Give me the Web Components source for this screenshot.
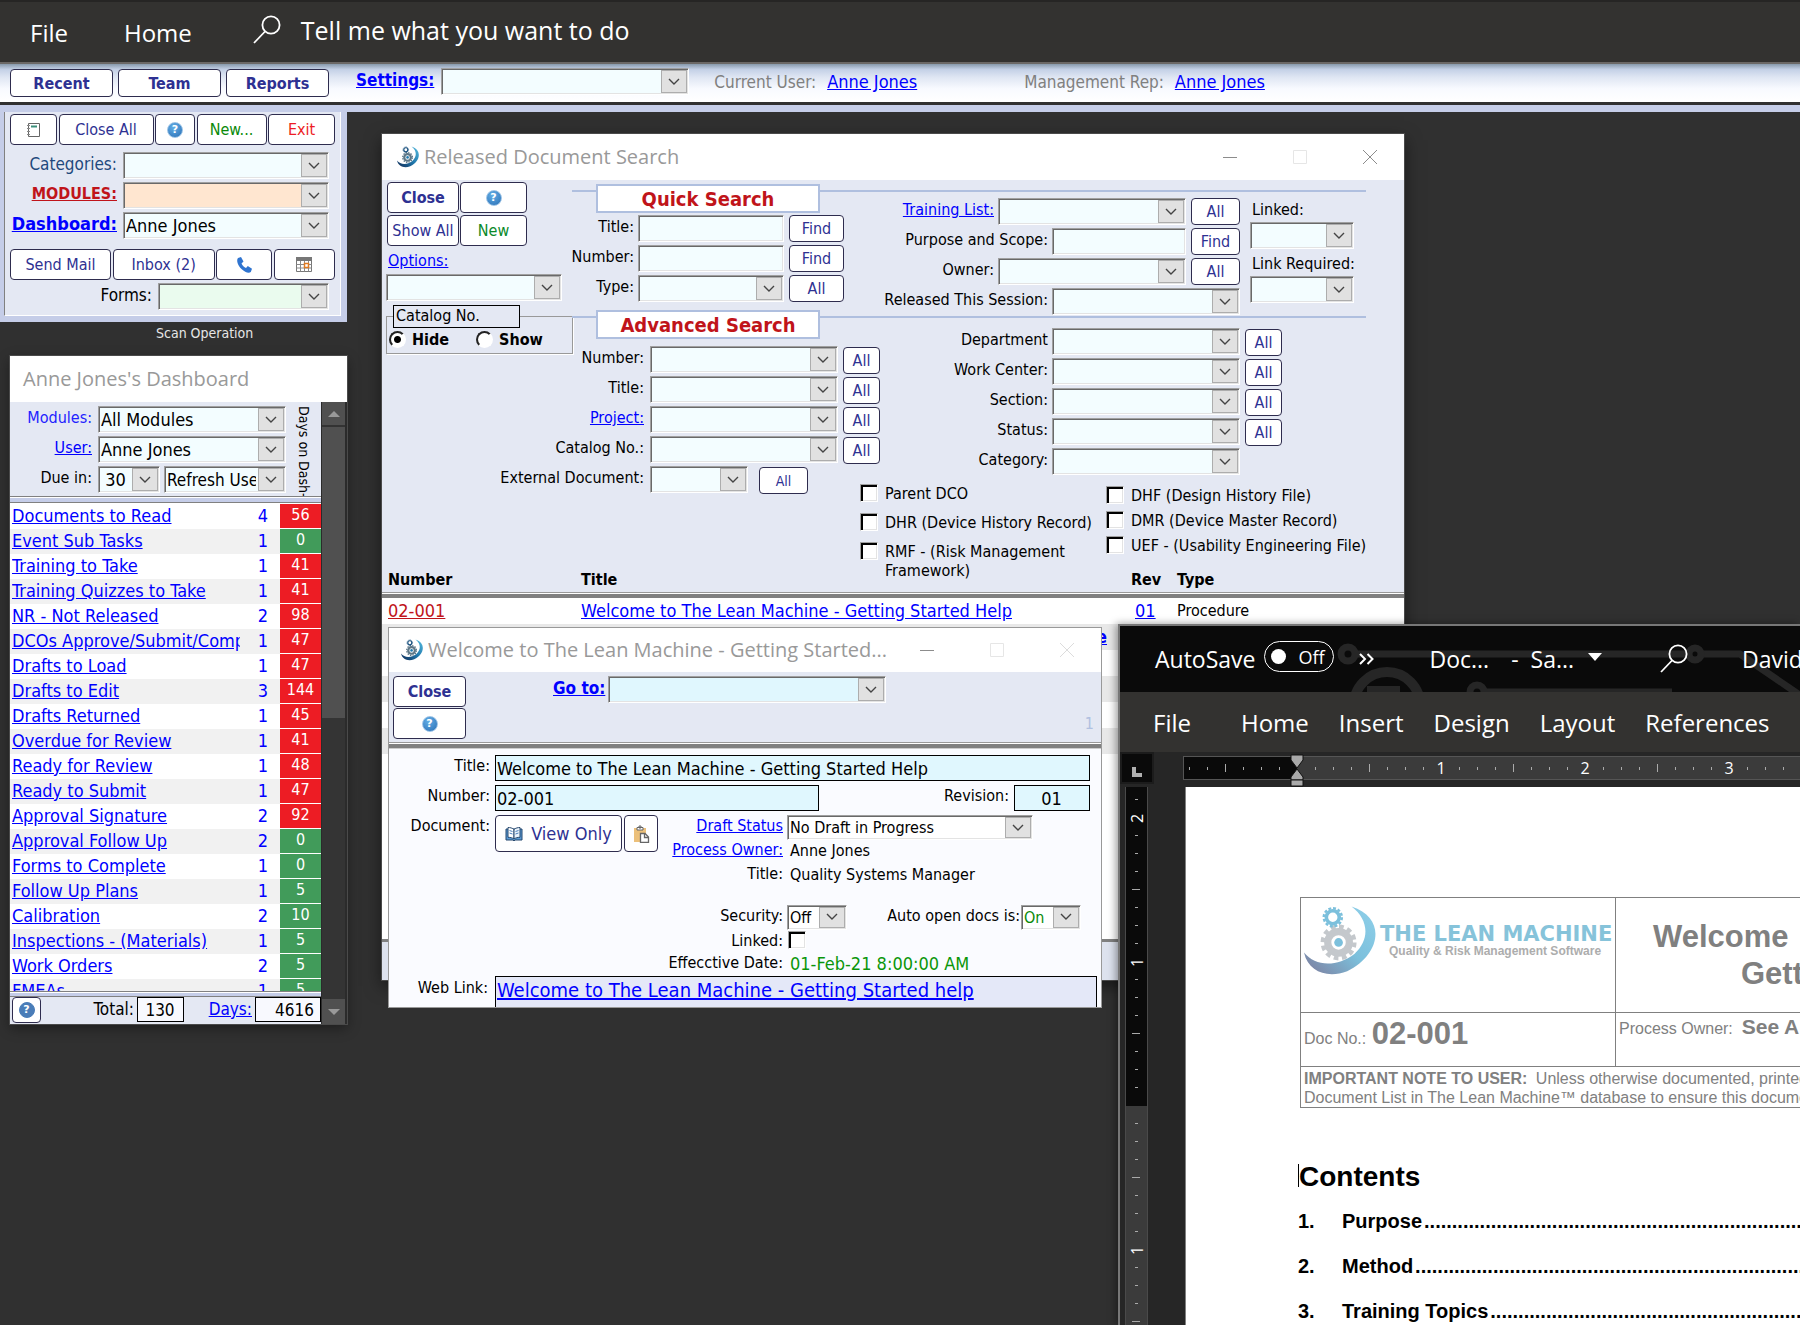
<!DOCTYPE html>
<html lang="en">
<head>
<meta charset="utf-8">
<title>The Lean Machine</title>
<style>
html, body { height: 100%; margin: 0; }
body { overflow: hidden; background: #303030; font-family: "DejaVu Sans Condensed", "DejaVu Sans", sans-serif; font-size: 16px; color: #000; }
</style>
</head>
<body>
<lean-desktop></lean-desktop>
<script>
const define = (name, css, html, setup) => {
  const tpl = document.createElement('template');
  tpl.innerHTML = `<style>*{box-sizing:border-box}:host{box-sizing:border-box}${css}</style>${typeof html === 'string' ? html : ''}`;
  customElements.define(name, class extends HTMLElement {
    constructor() {
      super();
      this.attachShadow({ mode: 'open' });
    }
    connectedCallback() {
      if (this.shadowRoot.childNodes.length) return;
      this.shadowRoot.append(tpl.content.cloneNode(true));
      if (typeof html === 'function') {
        const t = document.createElement('template');
        t.innerHTML = html(this);
        this.shadowRoot.append(t.content.cloneNode(true));
      }
      if (setup) setup(this, this.shadowRoot);
    }
  });
};

/* ---------- icons ---------- */
const ICONS = {
  search: [32, 32, '<g fill="none" stroke="#fff" stroke-width="1.8"><circle cx="20" cy="11" r="8.6"/><path d="M14 17.500 L3 29"/></g>'],
  note: [16, 18, '<path d="M2.500 2.500h11v13h-11z" fill="#fff" stroke="#666"/><path d="M5 5.500h6" stroke="#3a8f7a" stroke-width="2"/><path d="M1 4.500h3M1 7.500h3M1 10.500h3M1 13.500h3" stroke="#888"/>'],
  phone: [18, 18, '<path d="M3 2 L6 1 L8.500 5.500 L6.500 7.500 C7.500 9.800 9 11.200 11 12 L12.800 10 L17 12.800 L15.800 16 C14 17.500 10 16.500 6.500 13 C3 9.500 1 4.500 3 2Z" fill="#2f74d0"/>'],
  calendar: [18, 18, '<path d="M1.500 1.500h15v14h-15z" fill="#fff" stroke="#777"/><path d="M1 1h16v4H1z" fill="#777"/><path d="M1.500 8.500h15M1.500 12h15M5.500 5v10.500M9.500 5v10.500M13.500 5v10.500" stroke="#8a8a8a"/><path d="M9.500 7.500h4v4h-4z" fill="#fff" stroke="#e07a20" stroke-width="1.500"/>'],
  book: [18, 16, '<path d="M1 3v11h7l1 1 1-1h7V3z" fill="#5b9bd5" stroke="#27486e"/><path d="M3 1.500c2 0 4.500.5 6 2v9.500c-1.500-1.200-4-1.700-6-1.700z" fill="#fff" stroke="#27486e"/><path d="M15 1.500c-2 0-4.500.5-6 2v9.500c1.500-1.200 4-1.700 6-1.700z" fill="#eaf3fb" stroke="#27486e"/><path d="M4.500 4.500l3 1M4.500 7l3 1M10.500 5.500l3-1M10.500 8l3-1" stroke="#4a7ebb"/>'],
  paste: [18, 18, '<path d="M2 3h12v14H2z" fill="#ecc07a"/><path d="M5 2.500h6v2.500H5zM7 1h2v2H7z" fill="#fff" stroke="#666"/><path d="M8.500 8.500h4.500l3.500 3.500v5.500h-8z" fill="#fff" stroke="#666" stroke-width="1.300"/><path d="M12.500 8.500v4h4" fill="none" stroke="#666" stroke-width="1.300"/>'],
  chevron: [14, 14, '<path d="M2 4 L7 9 L12 4" fill="none" stroke="#444" stroke-width="1.400"/>'],
  min: [16, 16, '<path d="M1 8.500h14" stroke="#8c8c8c"/>'],
  max: [16, 16, '<path d="M1.500 1.500h13v13h-13z" fill="none" stroke="#e6e6e6"/>'],
  close: [16, 16, '<path d="M1 1l14 14M15 1L1 15" stroke="var(--close, #8c8c8c)"/>'],
  mark: [100, 100, '<defs><linearGradient id="g" x1="0" y1="1" x2="1" y2="0"><stop offset="0" stop-color="var(--deep,#102a55)"/><stop offset=".5" stop-color="var(--mid,#2179ad)"/><stop offset="1" stop-color="var(--light,#58bde0)"/></linearGradient></defs><path d="M66 2 C116 18 106 70 60 92 C34 102 6 94 0 66 C16 86 46 86 70 68 C92 48 90 20 66 2Z" fill="url(#g)"/><circle cx="48" cy="52" r="15" fill="none" stroke="var(--gear,#5d7787)" stroke-width="10"/><circle cx="48" cy="52" r="22" fill="none" stroke="var(--gear,#5d7787)" stroke-width="6" stroke-dasharray="6.500 5.020"/><circle cx="48" cy="52" r="6" fill="var(--mid,#2179ad)"/><circle cx="40" cy="17" r="9" fill="none" stroke="var(--mid,#174f7d)" stroke-width="5"/><circle cx="40" cy="17" r="12.500" fill="none" stroke="var(--mid,#174f7d)" stroke-width="3.500" stroke-dasharray="4 2.540"/>'],
  tabstop: [10, 10, '<path d="M0 0h4v6h6v4H0z" fill="#b0b0b0"/>'],
  more: [17, 14, '<path d="M2 2l5 5-5 5M9.500 2l5 5-5 5" fill="none" stroke="#fff" stroke-width="2"/>'],
  down: [14, 8, '<path d="M0 0h14L7 8z" fill="#fff"/>'],
  indent: [14, 33, '<path d="M1 1h12v5l-6 8-6-8z" fill="#a9a9a9" stroke="#111"/><path d="M7 15l6 8v3H1v-3z" fill="#a9a9a9" stroke="#111"/><path d="M1 26h12v6H1z" fill="#a9a9a9" stroke="#111"/>'],
  up: [12, 6, '<path d="M6 0l6 6H0z" fill="#999"/>'],
  dn: [12, 6, '<path d="M6 6l6-6H0z" fill="#999"/>']
};
define('ui-icon', ':host{display:inline-flex;flex:none}svg{display:block}', el => {
  const [w, h, body] = ICONS[el.getAttribute('name')];
  const s = +(el.getAttribute('size') || w);
  return `<svg width="${s}" height="${Math.round(s * h / w)}" viewBox="0 0 ${w} ${h}" aria-hidden="true">${body}</svg>`;
});

define('help-badge', `
:host{display:inline-flex;align-items:center;justify-content:center;width:16px;height:16px;border-radius:50%;
background:radial-gradient(circle at 40% 30%,#63aee6,#2a6fb5);border:1px solid #9cc3e6;color:#fff;font:bold 11px/14px "DejaVu Sans",sans-serif}
:host([flat]){background:#4a7db8;border-color:#4a7db8}
`, '?');

/* ---------- controls ---------- */
define('push-button', `
:host{display:block;flex:none;width:var(--w,auto);height:var(--h,27px)}
button{display:flex;align-items:center;justify-content:center;gap:8px;width:100%;height:100%;margin:0;padding:0;background:#fff;border:1px solid #2e2c4e;border-radius:4px;
color:var(--ink,#2e3192);font:inherit;font-size:var(--fs,16px);white-space:nowrap}
:host([bold]) button{font-weight:bold}
`, el => `<button type="button" aria-label="${el.getAttribute('label') || el.textContent.trim()}"><slot></slot></button>`);

define('form-field', `
:host{display:flex;align-items:flex-start;gap:4px;height:27px}
.cap{flex:var(--cap,1 1 0);min-width:0;display:flex;justify-content:flex-end;padding-top:1px;line-height:var(--cap-line,22px);font-size:var(--cap-size,16px);color:var(--cap-ink,#000);white-space:nowrap}
a.cap{color:var(--link,#00f);text-decoration:none}
:host([bold]) .cap{font-weight:bold}
.box{flex:none;display:grid;width:var(--w,188px);height:var(--h,27px);grid-template-columns:1fr 26px 2px}
.box.plain{grid-template-columns:1fr}
select,input{grid-area:1/1/2/-1;width:100%;height:100%;min-width:0;margin:0;padding:0 29px 0 2px;appearance:none;border-radius:0;background:var(--fill,#f3fdff);
border:1px solid;border-color:#a0a0a0 #fff #fff #a0a0a0;box-shadow:inset 1px 1px #696969,inset -1px -1px #e3e3e3;font:inherit;font-size:var(--fs,18px);color:var(--ink,#000);text-align:var(--align,left)}
input{padding:0 var(--pad,2px) 0 1px}
:host([flat]) input{border-color:#000;box-shadow:none}
.arrow{grid-area:1/2;margin:2px 0;display:flex;align-items:center;justify-content:center;background:#e1e1e1;border:1px solid #adadad;pointer-events:none}
.text{line-height:22px;padding:1px 0 0 3px;white-space:nowrap;font-size:var(--fs,16px);color:var(--ink,#000)}
::slotted(push-button){margin-left:1px}
`, el => {
  const a = n => el.getAttribute(n) || '';
  const kind = a('kind') || 'select', label = a('label');
  const name = el.hasAttribute('link') ? `<a id="n" class="cap" href="#"><u>${label}</u></a>` : (kind === 'text' ? `<span class="cap">${label}</span>` : label ? `<label class="cap" for="c">${label}</label>` : '');
  const tie = el.hasAttribute('link') ? 'aria-labelledby="n"' : label ? '' : `aria-label="${a('name')}"`;
  let box;
  if (kind === 'text') box = `<span class="text">${a('value')}</span>`;
  else if (kind === 'input') box = `<div class="box plain"><input id="c" ${tie} value="${a('value')}"></div>`;
  else box = `<div class="box"><select id="c" ${tie}><option>${a('value')}</option></select><span class="arrow"><ui-icon name="chevron"></ui-icon></span></div>`;
  return name + box + '<slot></slot>';
});

define('check-item', `
:host{display:flex;align-items:flex-start;gap:7px}
input{flex:none;appearance:none;width:18px;height:18px;margin:0;background:#fff;border:1px solid;border-color:#a0a0a0 #fff #fff #a0a0a0;box-shadow:inset 2px 2px #000,inset -1px -1px #e3e3e3}
label{line-height:19px;white-space:pre}
:host([before]){flex-direction:row-reverse;justify-content:flex-end;gap:5px}
:host([before]) label{flex:0 0 125px;text-align:right}
`, el => `<input type="checkbox" id="c"><label for="c">${el.getAttribute('label')}</label>`);

define('radio-item', `
:host{display:flex;align-items:center;gap:6px;font-weight:bold;font-size:16px}
input{flex:none;appearance:none;width:17px;height:17px;margin:0;border-radius:50%;background:#fff;border:2px solid;border-color:#222 #fff #fff #222}
input:checked{background:radial-gradient(circle,#000 0 3px,#fff 4px)}
`, el => `<input type="radio" id="r" name="r" ${el.hasAttribute('checked') ? 'checked' : ''}><label for="r">${el.getAttribute('label')}</label>`);

define('win-title', `
:host{display:flex;align-items:center;flex:none;height:46px;padding:0 26px 0 15px;background:#fff;color:#999;font:20px/28px "Open Sans",sans-serif}
h2{flex:1;margin:0 0 0 5px;font:inherit;white-space:nowrap}
.btns{display:flex;gap:54px}
button{border:0;background:none;padding:0;display:flex}
`, el => `${el.hasAttribute('bare') ? '' : '<ui-icon name="mark" size="22"></ui-icon>'}<h2><slot></slot></h2>${el.hasAttribute('bare') ? '' : `<div class="btns">
<button type="button" aria-label="Minimize"><ui-icon name="min"></ui-icon></button><button type="button" aria-label="Maximize"><ui-icon name="max"></ui-icon></button><button type="button" aria-label="Close window"><ui-icon name="close"></ui-icon></button></div>`}`);

/* ---------- top bars ---------- */
define('app-ribbon', `
:host{display:flex;align-items:center;flex:none;height:64px;padding:2px 30px 0;background:#333230;border-top:2px solid #262524;border-bottom:2px solid #6b6866;color:#fff;font:24px/32px "Open Sans",sans-serif}
a{color:inherit;text-decoration:none}
.home{margin-left:56px}
.tell{display:flex;align-items:center;gap:18px;margin-left:59px;padding-bottom:6px;font-size:25px}
`, `<a href="#">File</a><a class="home" href="#">Home</a><a class="tell" href="#"><ui-icon name="search"></ui-icon><span>Tell me what you want to do</span></a>`);

define('app-toolbar', `
:host{display:flex;flex:none;height:38px;padding:5px 10px 0;background:linear-gradient(#8799ab,#c3d0e6 14%,#dfe6f3 35%,#f8faff 65%,#fff);font-size:17px;color:#808080;line-height:25px}
.btns{display:flex;gap:5px;--w:103px;--h:28px}
.set{margin:-1px 0 0 27px;--w:248px;--cap:0 0 auto;--cap-size:17px;gap:7px}
.u{margin-left:25px;white-space:nowrap}
.u a{color:#00f;margin-left:6px;font-size:18px}
.u+.u{margin-left:107px}
`, `<div class="btns"><push-button bold>Recent</push-button><push-button bold>Team</push-button><push-button bold>Reports</push-button></div>
<form-field class="set" bold link label="Settings:"></form-field>
<span class="u">Current User: <a href="#">Anne Jones</a></span><span class="u">Management Rep: <a href="#">Anne Jones</a></span>`);

/* ---------- navigation panel ---------- */
define('nav-panel', `
:host{display:block;width:347px;padding:7px 6px 6px 4px;background:#c5cde8}
.in{display:flex;flex-direction:column;height:204px;padding:2px 6px 0 5px;background:#e4e8f3;border-left:1px solid #808080;border-right:1px solid #fff;border-bottom:1px solid #fff;gap:3px}
.row{display:flex;justify-content:space-between;width:325px;--h:31px}
.fields{display:flex;flex-direction:column;gap:3px;margin:4px 5px 7px 0;--w:206px;--cap-size:17px}
.forms{--w:171px;margin-right:5px;--cap-size:17px;--fill:#eafbee}
form-field{gap:6px}
`, `<div class="in">
<div class="row"><push-button style="--w:47px" label="Notes"><ui-icon name="note"></ui-icon></push-button><push-button style="--w:95px">Close All</push-button><push-button style="--w:40px" label="Help"><help-badge></help-badge></push-button><push-button style="--w:70px;--ink:#0a8a0a">New...</push-button><push-button style="--w:67px;--ink:#ed1c24">Exit</push-button></div>
<div class="fields"><form-field label="Categories:" style="--cap-ink:#1f497d"></form-field>
<form-field bold link label="MODULES:" style="--link:#c0141a;--fill:#ffe6d0;--cap-size:16px"></form-field>
<form-field bold link label="Dashboard:" value="Anne Jones" style="--cap-size:18px"></form-field></div>
<div class="row"><push-button style="--w:101px">Send Mail</push-button><push-button style="--w:102px">Inbox (2)</push-button><push-button style="--w:56px" label="Call"><ui-icon name="phone"></ui-icon></push-button><push-button style="--w:61px" label="Calendar"><ui-icon name="calendar"></ui-icon></push-button></div>
<form-field class="forms" label="Forms:"></form-field></div>`);

/* ---------- dashboard ---------- */
const TASKS = [['Documents to Read', 4, 56], ['Event Sub Tasks', 1, 0], ['Training to Take', 1, 41], ['Training Quizzes to Take', 1, 41], ['NR - Not Released', 2, 98], ['DCOs Approve/Submit/Comp', 1, 47], ['Drafts to Load', 1, 47], ['Drafts to Edit', 3, 144], ['Drafts Returned', 1, 45], ['Overdue for Review', 1, 41], ['Ready for Review', 1, 48], ['Ready to Submit', 1, 47], ['Approval Signature', 2, 92], ['Approval Follow Up', 2, 0], ['Forms to Complete', 1, 0], ['Follow Up Plans', 1, 5], ['Calibration', 2, 10], ['Inspections - (Materials)', 1, 5], ['Work Orders', 2, 5], ['FMEAs', 1, 5]];

define('task-list', `
:host{display:block;flex:1;min-height:0;overflow:hidden;background:#fff}
table{width:100%;border-collapse:collapse;table-layout:fixed;font-size:18px}
tr{height:25px}
tr:nth-child(even){background:#f1f1f1}
td{padding:0;height:25px;line-height:24px;white-space:nowrap;overflow:hidden}
td:nth-child(1){padding-left:2px}
td a{color:#00f;display:block;overflow:hidden}
td:nth-child(2){text-align:right;color:#00f;padding-right:12px}
td:nth-child(3){background:#ed1c24;border-top:1px solid #fff;color:#fff;text-align:center;font-size:16px;line-height:20px;padding-bottom:3px}
td.ok{background:#419b5a}
`, `<table><colgroup><col style="width:230px"><col style="width:40px"><col></colgroup><tbody>${TASKS.map(([n, c, d]) => `<tr><td><a href="#">${n}</a></td><td>${c}</td><td class="${d > 10 ? '' : 'ok'}">${d}</td></tr>`).join('')}</tbody></table>`);

define('dash-window', `
:host{display:flex;flex-direction:column;width:337px;height:668px;background:#e4e8f3;box-shadow:0 0 0 1px #4a4a4a,0 4px 12px #0006}
.body{flex:1;min-height:0;display:flex}
.main{flex:1;display:flex;flex-direction:column;min-width:0}
.head{flex:none;display:flex;height:94px;padding:4px 0 0;overflow:hidden}
.f{width:276px;display:flex;flex-direction:column;gap:3px}
.f>*,.two form-field{gap:6px}
.two{display:flex;gap:4px}
.side{writing-mode:vertical-rl;margin-left:9px;font-size:14px;line-height:18px;white-space:nowrap}
.rule{flex:none;height:7px;background:#c5cde8;border-top:1px solid #808080;border-bottom:1px solid #808080;box-shadow:inset 0 1px #fff}
.foot{flex:none;display:flex;height:27px;padding:0 0 0 2px;align-items:flex-start}
.foot form-field{--h:25px;--fs:17px;--cap-size:17px;--fill:#f8f9fe;gap:3px}
.bar{flex:none;width:26px;background:#343434;border:solid #2b2b2b;border-width:0 2px 0 1px;display:flex;flex-direction:column}
.bar span{display:flex;align-items:center;justify-content:center;height:25px;background:#505050;border-bottom:2px solid #333}
.bar i{height:291px;background:#505050}
.bar span:last-child{margin:auto 0 0;border:0}
`, `<win-title bare style="padding-left:8px">Anne Jones's Dashboard</win-title>
<div class="body"><div class="main">
<div class="head"><div class="f"><form-field style="--cap-ink:#22f" label="Modules:" value="All Modules"></form-field><form-field link label="User:" value="Anne Jones"></form-field>
<div class="two"><form-field style="flex:1;--w:62px;--align:center" label="Due in:" value="30"></form-field><form-field style="--w:122px;--fs:17px" name="Refresh" value="Refresh User"></form-field></div></div><span class="side">Days on Dash-</span></div>
<div class="rule"></div><task-list></task-list><div class="rule" style="height:6px"></div>
<div class="foot"><push-button style="--w:29px;--h:26px" label="Help"><help-badge flat></help-badge></push-button>
<form-field flat kind="input" style="--w:47px;flex:0 0 143px;--align:center" label="Total:" value="130"></form-field>
<form-field flat link kind="input" style="--w:66px;--pad:6px;flex:1;--align:right" label="Days:" value="4616"></form-field></div>
</div><div class="bar"><span><ui-icon name="up"></ui-icon></span><i></i><span><ui-icon name="dn"></ui-icon></span></div></div>`);

/* ---------- released document search ---------- */
define('section-head', `
:host{display:flex;flex:none;height:29px}
i{flex:0 0 24px;height:2px;margin-top:6px;background:#afbfdf}
i:last-child{flex:1}
h3{flex:0 0 224px;margin:0;background:#fff;border:2px solid #afbfdf;color:#c0141a;font-size:20px;line-height:26px;text-align:center}
`, '<i></i><h3><slot></slot></h3><i></i>');

define('search-window', `
:host{display:flex;flex-direction:column;width:1022px;height:846px;background:#fff;box-shadow:0 0 0 1px #4a4a4a,0 6px 16px #0008}
.form{position:relative;z-index:1;flex:none;display:flex;height:388px;background:#e4e8f3;padding:2px 0 0 4px}
.tools{flex:0 0 186px;min-width:0;display:flex;flex-direction:column}
.grid{display:grid;grid-template-columns:73px 67px;gap:2px 0;--h:31px;margin-left:1px}
.grid push-button:nth-child(odd){--w:72px}
.opt{display:block;margin:5px 0 3px 2px;color:#00f;line-height:20px}
fieldset{width:187px;min-width:0;height:49px;margin:4px 0 0;padding:2px 0 0 2px;border:1px solid #999;box-shadow:1px 1px #fff}
legend{width:127px;height:23px;margin-left:4px;padding:0 2px;border:1px solid #000;line-height:20px}
.radios{display:flex;gap:27px}
.left{flex:0 0 308px;margin-top:2px;display:flex;flex-direction:column}
.left section-head{width:308px}
.qf,.af,.rf{display:flex;flex-direction:column;gap:3px}
.qf{margin:2px 0 8px;width:274px}
.qf form-field{--w:146px}
.qf form-field push-button{--w:55px}
.af{margin-top:7px}
.af form-field{--cap:0 0 72px;gap:6px}
.af push-button,.dept push-button{--w:37px;margin-top:1px}
.af push-button{margin-left:-1px}
.right{flex:0 0 486px;display:flex;flex-direction:column;margin-top:8px}
.line{flex:none;height:2px;background:#afbfdf}
.top{display:flex;gap:10px}
.rf{margin:6px 0 1px;width:360px}
.rf form-field{gap:4px}
.rf form-field push-button{--w:49px}
.lk{display:flex;flex-direction:column;width:104px;padding-top:6px;white-space:nowrap}
.lk form-field{--w:104px;height:27px;margin-bottom:3px}
.lk label{line-height:24px;padding-left:2px}
.dept{margin-top:10px;width:402px;display:flex;flex-direction:column;gap:3px}
.dept form-field{--cap:0 0 168px;gap:4px}
.checks{display:flex;margin:9px 0 0 -20px}
.checks>div:first-child{width:246px;display:flex;flex-direction:column;gap:10px}
.checks>div:last-child{display:flex;flex-direction:column;gap:6px;padding-top:2px}
table{width:100%;border-collapse:collapse;table-layout:fixed}
th{height:30px;padding:0 0 6px 6px;text-align:left;font-size:16px;line-height:22px;background:linear-gradient(#e4e8f3 24px,#999 24px 25px,#fff 25px 26px,#808080 26px)}
td{height:26px;padding:0 0 0 6px;line-height:26px;font-size:18px;white-space:nowrap;vertical-align:top}
th+th,td+td{padding-left:0}
tbody tr:nth-child(even){background:#e8e8e8}
td a{color:#00f}
td a.no{color:#c0141a}
td:nth-child(3){padding-left:4px}
td:nth-child(4){font-size:16px}
.foot{margin-top:auto;height:41px;background:#dde2ee;border-top:3px solid #808080}
`, `<win-title>Released Document Search</win-title>
<div class="form">
<div class="tools"><div class="grid"><push-button bold>Close</push-button><push-button label="Help"><help-badge></help-badge></push-button><push-button>Show All</push-button><push-button style="--ink:#0a8a2a">New</push-button></div>
<a class="opt" href="#">Options:</a><form-field name="Options" style="--w:176px"></form-field>
<fieldset><legend>Catalog No.</legend><div class="radios"><radio-item label="Hide" checked></radio-item><radio-item label="Show"></radio-item></div></fieldset></div>
<div class="left"><section-head>Quick Search</section-head>
<div class="qf"><form-field style="--cap:0 0 62px" kind="input" label="Title:"><push-button>Find</push-button></form-field><form-field style="--cap:0 0 62px" kind="input" label="Number:"><push-button>Find</push-button></form-field><form-field style="--cap:0 0 62px" label="Type:"><push-button>All</push-button></form-field></div>
<section-head>Advanced Search</section-head>
<div class="af"><form-field label="Number:"><push-button>All</push-button></form-field><form-field label="Title:"><push-button>All</push-button></form-field><form-field link label="Project:"><push-button>All</push-button></form-field><form-field label="Catalog No.:"><push-button>All</push-button></form-field><form-field style="--w:98px;gap:6px" label="External Document:"><push-button style="--w:49px;--fs:14px;margin-left:5px">All</push-button></form-field></div></div>
<div class="right"><div class="line"></div><div class="top"><div class="rf">
<form-field link label="Training List:"><push-button>All</push-button></form-field><form-field kind="input" style="--w:134px" label="Purpose and Scope:"><push-button>Find</push-button></form-field><form-field label="Owner:"><push-button>All</push-button></form-field><form-field label="Released This Session:"></form-field></div>
<div class="lk"><label>Linked:</label><form-field name="Linked"></form-field><label>Link Required:</label><form-field name="Link Required"></form-field></div></div>
<div class="line"></div>
<div class="dept"><form-field label="Department"><push-button>All</push-button></form-field><form-field label="Work Center:"><push-button>All</push-button></form-field><form-field label="Section:"><push-button>All</push-button></form-field><form-field label="Status:"><push-button>All</push-button></form-field><form-field label="Category:"></form-field></div>
<div class="checks"><div><check-item label="Parent DCO"></check-item><check-item label="DHR (Device History Record)"></check-item><check-item label="RMF - (Risk Management&#10;Framework)"></check-item></div>
<div><check-item label="DHF (Design History File)"></check-item><check-item label="DMR (Device Master Record)"></check-item><check-item label="UEF - (Usability Engineering File)"></check-item></div></div>
</div></div>
<table><colgroup><col style="width:199px"><col style="width:550px"><col style="width:46px"><col></colgroup><thead><tr><th>Number</th><th>Title</th><th>Rev</th><th>Type</th></tr></thead>
<tbody><tr><td><a class="no" href="#">02-001</a></td><td><a href="#">Welcome to The Lean Machine - Getting Started Help</a></td><td><a href="#">01</a></td><td>Procedure</td></tr>
<tr><td></td><td style="text-align:right;padding-right:24px"><a href="#"><b>e</b></a></td><td></td><td></td></tr><tr><td colspan="4"></td></tr><tr><td colspan="4"></td></tr><tr><td colspan="4"></td></tr><tr><td colspan="4"></td></tr></tbody></table>
<div class="foot"></div>`);

/* ---------- document window ---------- */
define('doc-window', `
:host{display:flex;flex-direction:column;width:714px;height:381px;overflow:hidden;background:#fafbff;border:1px solid #999}
win-title{height:44px;padding-left:12px;--close:#dcdcdc}
.head{flex:none;display:flex;height:70px;padding:4px 7px 0 4px;background:#e4e8f3}
.btns{--w:73px;--h:31px;display:flex;flex-direction:column;gap:1px}
.go{margin-left:87px;--w:278px;--fill:#e0f7fe;--cap:0 0 auto;--cap-size:17px;gap:3px}
.n{margin:auto 0 8px auto;color:#b0c0e0;line-height:20px}
.rule{flex:none;height:7px;background:linear-gradient(#999 1px,#fff 1px 2px,#808080 2px 6px,#ccc 6px)}
.body{padding:6px 11px 0 0;display:flex;flex-direction:column;gap:4px}
.body form-field{gap:5px}
.l{--cap:0 0 101px;--fill:#e0f7fe;--h:26px;--cap-line:19px;height:26px}
.two{display:flex;justify-content:space-between}
.three{display:flex;align-items:flex-start}
.three>label{flex:0 0 101px;margin-right:5px;text-align:right;line-height:22px}
.three>push-button{--h:37px;margin-right:2px}
.stack{display:flex;flex-direction:column;height:161px;--fill:#fff;--fs:16px;--h:25px;--cap-line:20px}
.stack form-field{height:24px;--cap:0 0 125px;gap:4px}
.stack .gap{margin-top:18px}
.stack check-item{height:24px;padding-top:2px}
.sec{display:flex}
.web{display:flex;gap:7px}
.web label{flex:0 0 99px;text-align:right;line-height:24px}
.web a{display:block;width:602px;height:32px;padding-left:1px;border:1px solid #000;background:#e4e8f8;color:#00f;font-size:20px;line-height:27px;white-space:nowrap}
`, `<win-title>Welcome to The Lean Machine - Getting Started...</win-title>
<div class="head"><div class="btns"><push-button bold>Close</push-button><push-button label="Help"><help-badge></help-badge></push-button></div><form-field class="go" bold link label="Go to:"></form-field><span class="n">1</span></div>
<div class="rule"></div>
<div class="body"><form-field class="l" flat kind="input" label="Title:" style="--w:595px" value="Welcome to The Lean Machine - Getting Started Help"></form-field>
<div class="two"><form-field class="l" flat kind="input" label="Number:" style="--w:324px" value="02-001"></form-field><form-field class="l" flat kind="input" label="Revision:" style="--w:76px;--align:center" value="01"></form-field></div>
<div class="three"><label>Document:</label><push-button style="--w:127px;--fs:18px" label="View Only"><ui-icon name="book"></ui-icon>View Only</push-button><push-button style="--w:34px;margin:0" label="Paste"><ui-icon name="paste"></ui-icon></push-button>
<div class="stack"><form-field link label="Draft Status" value="No Draft in Progress" style="--w:246px"></form-field><form-field kind="text" link label="Process Owner:" value="Anne Jones"></form-field><form-field kind="text" label="Title:" value="Quality Systems Manager"></form-field>
<div class="sec gap"><form-field label="Security:" value="Off" style="--w:60px"></form-field><form-field label="Auto open docs is:" value="On" style="--w:60px;--cap:0 0 173px;gap:1px;--ink:#0a8a0a"></form-field></div>
<check-item before label="Linked:"></check-item><form-field kind="text" label="Effecctive Date:" value="01-Feb-21 8:00:00 AM" style="--ink:#0a960a;--fs:18px"></form-field></div></div></div>
<div class="web"><label>Web Link:</label><a href="#">Welcome to The Lean Machine - Getting Started help</a></div>`);

/* ---------- word window ---------- */
const ticks = (from, to) => {
  let s = '';
  for (let k = from; k <= to; k++) s += k % 8 === 0 ? `<b>${Math.abs(k / 8)}</b>` : `<b><i class="${k % 4 === 0 ? 'long' : ''}"></i></b>`;
  return s;
};
define('ruler-strip', `
:host{display:flex;overflow:hidden;font:16px/20px "Open Sans",sans-serif;color:#fff}
.a,.b{display:flex;overflow:hidden}
b{flex:0 0 18px;display:flex;align-items:center;justify-content:center;font-weight:normal}
i{background:#aaa;width:1px;height:3px}i.long{height:8px}
.a{background:#0a0a0a;justify-content:flex-end}.b{background:#3b3b3b;flex:1}
:host(:not([vertical])){height:24px;border:1px solid #555;border-right:0}
:host(:not([vertical])) .a{flex:0 0 113px;padding-right:9px}:host(:not([vertical])) .b{padding-left:9px}
:host([vertical]){flex-direction:column;width:23px;border:1px solid #4a4a4a;border-width:0 1px}
:host([vertical]) .a,:host([vertical]) .b{flex-direction:column}
:host([vertical]) .a{flex:0 0 319px;padding-bottom:9px}:host([vertical]) .b{padding-top:9px}
:host([vertical]) b{writing-mode:vertical-rl;rotate:180deg;flex-direction:column}
:host([vertical]) i{width:3px;height:1px}:host([vertical]) i.long{width:8px}
`, el => `<div class="a">${ticks(+el.getAttribute('back'), -1)}</div><div class="b">${ticks(1, +el.getAttribute('fwd'))}</div>`);

define('lean-logo', `
:host{display:flex;align-items:flex-start;width:310px;--deep:#7d7b9c;--mid:#7cc0dc;--light:#8fd0ea;--gear:#c4c8cc}
div{margin-left:4px;padding-top:18px;white-space:nowrap}
strong{display:block;color:#86c3da;font:bold 21px/22px "DejaVu Sans",sans-serif}
small{display:block;padding-left:9px;color:#adadad;font:bold 12px/12px "Liberation Sans",sans-serif}
`, '<ui-icon name="mark" size="72"></ui-icon><div><strong>THE LEAN MACHINE</strong><small>Quality &amp; Risk Management Software</small></div>');

define('word-page', `
:host{display:block;flex:1;min-width:0;overflow:hidden;background:#fff;border-left:1px solid #808080;padding:110px 0 0 114px;color:#000;font-family:"Liberation Sans",Arial,sans-serif}
table{width:760px;border-collapse:collapse;table-layout:fixed;color:#808080;font-size:16px}
td{border:1px solid #808080;padding:0 3px;vertical-align:top;line-height:19px;white-space:nowrap}
.t1 td{height:115px}
.t1 lean-logo{margin-top:7px}
.t2 td{height:54px}
h1{margin:20px 0 0 34px;font-size:31px;line-height:37px}
h1 span{display:block;padding-left:88px}
.no{font-size:31px;line-height:42px;padding-left:1px}
.see{font-size:21px;line-height:28px}
.t3 td{height:41px;line-height:19px;padding-top:2px}
.sp{padding-left:4px}
h2{margin:56px 0 0 -2px;border-left:1px solid #000;height:23px;font-size:28px;line-height:26px}
ol{list-style:none;margin:20px 0 0 -2px;padding:0;font-weight:bold;font-size:20px}
li{display:flex;height:45px;line-height:28px;white-space:nowrap}
li span:first-child{flex:0 0 44px}
li span:last-child{flex:1;overflow:hidden;padding-left:2px}
`, `<table><colgroup><col style="width:315px"><col></colgroup><tbody>
<tr class="t1"><td><lean-logo></lean-logo></td><td><h1>Welcome<span>Getting</span></h1></td></tr>
<tr class="t2"><td>Doc No.: <b class="no">02-001</b></td><td>Process Owner: &nbsp;<b class="see">See A</b></td></tr>
<tr class="t3"><td colspan="2"><b>IMPORTANT NOTE TO USER:</b><span class="sp">&nbsp;Unless otherwise documented, printed</span><br>Document List in The Lean Machine™ database to ensure this document</td></tr></tbody></table>
<h2>Contents</h2>
<ol>${['Purpose', 'Method', 'Training Topics'].map((t, i) => `<li><span>${i + 1}.</span><span>${t}</span><span>${'.'.repeat(85)}</span></li>`).join('')}</ol>`);

define('word-window', `
:host{display:flex;flex-direction:column;background:#262626;border:2px solid #777;border-width:2px 0 0 2px;box-shadow:-2px 0 8px #0006;overflow:hidden;color:#fff;font-family:"Open Sans",sans-serif}
.bar{position:relative;flex:none;height:66px;background:#0a0a0a;display:flex;align-items:center;padding:0 0 5px 35px;font-size:23px;line-height:30px;white-space:nowrap;overflow:hidden}
.art{position:absolute;inset:0}
.bar>*:not(.art){position:relative;flex:none}
.bar>span,.bar>.find{padding-top:4px}
button{font:inherit;color:inherit;background:none;padding:0;border:0}
.bar>.sw{display:flex;align-items:center;gap:12px;width:70px;height:31px;margin-left:9px;padding-left:6px;border:1px solid #fff;border-radius:16px;font-size:18px}
.sw i{flex:none;width:15px;height:15px;border-radius:50%;background:#fff}
nav{flex:none;display:flex;align-items:center;height:60px;padding-left:33px;gap:30px;background:#333230;font-size:24px}
nav a{color:inherit;text-decoration:none}
nav a:first-child{margin-right:20px}
.top{flex:none;display:flex;height:35px;align-items:flex-start}
.corner{display:flex;align-items:center;justify-content:center;width:34px;height:32px;background:#0a0a0a;border:2px solid #1c1c1c;padding-top:8px}
.top .r{flex:1;min-width:0;margin:4px 0 0 29px;display:grid}
.top ruler-strip{grid-area:1/1}
.top .mk{grid-area:1/1;margin:-2px 0 -10px 107px;z-index:1}
.main{flex:1;min-height:0;display:flex}
.main ruler-strip{margin:0 37px 0 5px}
`, `<div class="bar"><svg class="art" width="682" height="66" aria-hidden="true"><g fill="none" stroke="#262626" stroke-width="7"><circle cx="228" cy="28" r="7"/><path d="M235 28H568M582 28H620L684 72"/><circle cx="575" cy="28" r="6"/><circle cx="267" cy="79" r="33" stroke-width="10"/><circle cx="357" cy="66" r="7"/><path d="M364 66H552"/></g><path d="M247 60h33v6h-33z" fill="#262626"/></svg>
<span>AutoSave</span><button type="button" class="sw" role="switch" aria-checked="false"><i></i>Off</button><button type="button" aria-label="More commands" style="margin-left:24px"><ui-icon name="more"></ui-icon></button><span style="margin-left:54px">Doc...</span><span style="margin-left:22px">-</span><span style="margin-left:12px">Sa...</span><ui-icon name="down" style="margin-left:14px"></ui-icon><ui-icon class="find" name="search" style="margin-left:56px"></ui-icon><span style="margin-left:52px">David</span></div>
<nav><a href="#">File</a><a href="#">Home</a><a href="#">Insert</a><a href="#">Design</a><a href="#">Layout</a><a href="#">References</a></nav>
<div class="top"><div class="corner"><ui-icon name="tabstop"></ui-icon></div><div class="r"><ruler-strip back="-6" fwd="27"></ruler-strip><ui-icon class="mk" name="indent"></ui-icon></div></div>
<div class="main"><ruler-strip vertical back="-17" fwd="12"></ruler-strip><word-page></word-page></div>`);

/* ---------- desktop ---------- */
define('lean-desktop', `
:host{display:flex;flex-direction:column;height:100vh;background:#303030}
.strip{flex:none;height:10px;background:#c5cde8;border-top:3px solid #303030}
.space{position:relative;flex:1;min-height:0}
.space>*{position:absolute}
nav-panel{left:0;top:-7px}
.scan{left:156px;top:212px;color:#e6e6e6;font-size:14px;line-height:18px}
dash-window{left:10px;top:244px}
search-window{left:382px;top:22px}
doc-window{left:388px;top:515px}
word-window{left:1118px;top:512px;right:0;bottom:0}
`, `<app-ribbon></app-ribbon><app-toolbar></app-toolbar><div class="strip"></div>
<div class="space"><nav-panel></nav-panel><span class="scan">Scan Operation</span><dash-window></dash-window><search-window></search-window><doc-window></doc-window><word-window></word-window></div>`);
</script>
</body>
</html>
